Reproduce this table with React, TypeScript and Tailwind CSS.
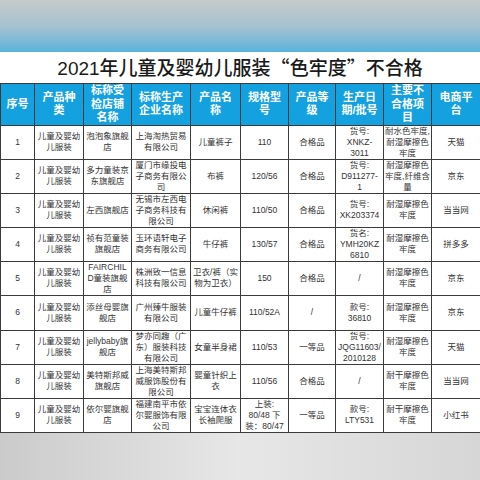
import React from "react";

const cols = [34, 49, 48, 59, 50, 48, 47, 48, 48, 49];

const header: string[][] = [
  ["序号"],
  ["产品种", "类"],
  ["标称受", "检店铺", "名称"],
  ["标称生产", "企业名称"],
  ["产品名", "称"],
  ["规格型", "号"],
  ["产品等", "级"],
  ["生产日", "期/批号"],
  ["主要不", "合格项", "目"],
  ["电商平", "台"],
];

const kind = ["儿童及婴幼", "儿服装"];

// each row: height, then cells as line arrays
const rows: { h: number; cells: string[][] }[] = [
  {
    h: 34,
    cells: [["1"], kind, ["泡泡象旗舰", "店"], ["上海淘热贸易", "有限公司"], ["儿童裤子"], ["110"], ["合格品"], ["货号:", "XNKZ-", "3011"], ["耐水色牢度,", "耐湿摩擦色", "牢度"], ["天猫"]],
  },
  {
    h: 34,
    cells: [["2"], kind, ["多力童装京", "东旗舰店"], ["厦门市缘投电", "子商务有限公", "司"], ["布裤"], ["120/56"], ["合格品"], ["货号:", "D911277-", "1"], ["耐湿摩擦色", "牢度,纤维含", "量"], ["京东"]],
  },
  {
    h: 33,
    cells: [["3"], kind, ["左西旗舰店"], ["无锡市左西电", "子商务科技有", "限公司"], ["休闲裤"], ["110/50"], ["合格品"], ["货号:", "XK203374"], ["耐湿摩擦色", "牢度"], ["当当网"]],
  },
  {
    h: 33,
    cells: [["4"], kind, ["祯有范童装", "旗舰店"], ["玉环语轩电子", "商务有限公司"], ["牛仔裤"], ["130/57"], ["合格品"], ["货名:", "YMH20KZ", "6810"], ["耐湿摩擦色", "牢度"], ["拼多多"]],
  },
  {
    h: 34,
    cells: [["5"], kind, ["FAIRCHIL", "D童装旗舰", "店"], ["株洲致一信息", "科技有限公司"], ["卫衣/裤（实", "物为卫衣）"], ["150"], ["合格品"], ["/"], ["耐湿摩擦色", "牢度"], ["京东"]],
  },
  {
    h: 35,
    cells: [["6"], kind, ["添丝母婴旗", "舰店"], ["广州臻牛服装", "有限公司"], ["儿童牛仔裤"], ["110/52A"], ["/"], ["款号:", "36810"], ["耐湿摩擦色", "牢度"], ["京东"]],
  },
  {
    h: 33,
    cells: [["7"], kind, ["jellybaby旗", "舰店"], ["梦亦同趣（广", "东）服装科技", "有限公司"], ["女童半身裙"], ["110/53"], ["一等品"], ["货号:", "JQG11603/", "2010128"], ["耐湿摩擦色", "牢度"], ["天猫"]],
  },
  {
    h: 33,
    cells: [["8"], kind, ["美特斯邦威", "旗舰店"], ["上海美特斯邦", "威服饰股份有", "限公司"], ["婴童针织上", "衣"], ["110/56"], ["合格品"], ["/"], ["耐干摩擦色", "牢度"], ["当当网"]],
  },
  {
    h: 33,
    cells: [["9"], kind, ["依尔婴旗舰", "店"], ["福建南平市依", "尔婴服饰有限", "公司"], ["宝宝连体衣", "长袖爬服"], ["上装:", "80/48 下", "装：80/47"], ["一等品"], ["款号:", "LTY531"], ["耐干摩擦色", "牢度"], ["小红书"]],
  },
];

const font = { fontFamily: '"Liberation Sans","Noto Sans CJK SC",sans-serif' };
const cjk = { fontFamily: '"Noto Sans CJK SC",sans-serif' };

export default function App() {
  return (
    <div className="flex h-[480px] w-[480px] flex-col overflow-hidden bg-white" style={font}>
      {/* blurred banner strip */}
      <div className="h-[52px] shrink-0 bg-gradient-to-b from-[#c6cacc] via-[#a6c2d0] to-[#57b3dc]" />

      <div className="flex h-[31px] shrink-0 items-center justify-center bg-white">
        <h1 className="text-[19px] font-medium leading-none text-[#1a1a1a]">
          2021年儿童及婴幼儿服装<span style={cjk}>“</span>色牢度<span style={cjk}>”</span>不合格
        </h1>
      </div>

      <table className="w-[480px] shrink-0 table-fixed border-collapse">
        <colgroup>
          {cols.map((w, i) => (
            <col key={i} style={{ width: w }} />
          ))}
        </colgroup>
        <thead>
          <tr className="h-[41px] bg-[#14a1e0]">
            {header.map((lines, i) => (
              <th key={i} className="border border-[#3b3b3b] p-0 align-middle text-[11px] font-bold leading-[13.5px] text-white">
                {lines.map((l, j) => (
                  <div key={j} className="whitespace-nowrap">{l}</div>
                ))}
              </th>
            ))}
          </tr>
        </thead>
        <tbody>
          {rows.map((r, ri) => (
            <tr key={ri} style={{ height: r.h }}>
              {r.cells.map((lines, ci) => (
                <td key={ci} className="border border-[#3b3b3b] p-0 text-center align-middle text-[8.5px] leading-[11px] text-[#333]">
                  {lines.map((l, j) => (
                    <div key={j} className="whitespace-nowrap">{l}</div>
                  ))}
                </td>
              ))}
            </tr>
          ))}
        </tbody>
      </table>

      <div className="flex-1 bg-gradient-to-r from-[#cbcbcb] via-[#e7e7e7] to-[#d6d6d6]" />
    </div>
  );
}
